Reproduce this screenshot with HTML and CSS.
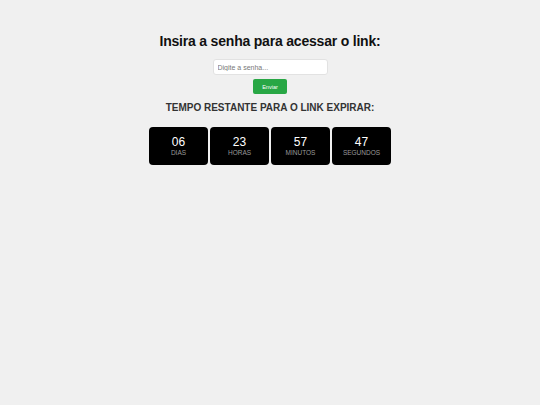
FILE: index.html
```html
<!DOCTYPE html>
<html lang="pt">
<head>
<meta charset="utf-8">
<link rel="stylesheet" href="styles.css">
</head>
<body>
<div class="page">
  <h1 class="title">Insira a senha para acessar o link:</h1>
  <input class="pass" type="password" placeholder="Digite a senha...">
  <button class="send">Enviar</button>
  <h2 class="sub">TEMPO RESTANTE PARA O LINK EXPIRAR:</h2>
  <div class="timer">
    <div class="box"><span class="num">06</span><span class="lbl">DIAS</span></div>
    <div class="box"><span class="num">23</span><span class="lbl">HORAS</span></div>
    <div class="box"><span class="num">57</span><span class="lbl">MINUTOS</span></div>
    <div class="box"><span class="num">47</span><span class="lbl">SEGUNDOS</span></div>
  </div>
</div>
</body>
</html>
```

FILE: styles.css
```css
html, body {
  margin: 0;
  padding: 0;
  background: #f0f0f0;
  font-family: "Liberation Sans", Arial, sans-serif;
}
.page {
  display: flex;
  flex-direction: column;
  align-items: center;
  padding-top: 32px;
}
.title {
  margin: 0;
  font-size: 14px;
  letter-spacing: -0.2px;
  line-height: 19px;
  font-weight: bold;
  color: #111;
}
.pass {
  margin-top: 8px;
  width: 115px;
  height: 16px;
  box-sizing: border-box;
  border: 1px solid #e2e2e2;
  border-radius: 3px;
  background: #fff;
  padding: 0 4px;
  font-family: "Liberation Sans", Arial, sans-serif;
  font-size: 7px;
  color: #333;
  outline: none;
}
.pass::placeholder { color: #777; }
.send {
  margin-top: 4px;
  width: 34px;
  height: 15px;
  box-sizing: border-box;
  border: none;
  border-radius: 2px;
  background: #28a745;
  color: #fff;
  font-family: "Liberation Sans", Arial, sans-serif;
  font-size: 5.5px;
  padding: 0;
}
.sub {
  margin: 8px 0 0;
  font-size: 10px;
  line-height: 12px;
  font-weight: bold;
  color: #333;
}
.timer {
  display: flex;
  gap: 2px;
  margin-top: 13px;
}
.box {
  width: 59px;
  height: 38px;
  background: #000;
  border-radius: 4px;
  display: flex;
  flex-direction: column;
  align-items: center;
  justify-content: center;
}
.num {
  color: #fff;
  font-size: 12px;
  line-height: 13px;
}
.lbl {
  color: #9a9a9a;
  font-size: 6.5px;
  line-height: 8px;
}
```
